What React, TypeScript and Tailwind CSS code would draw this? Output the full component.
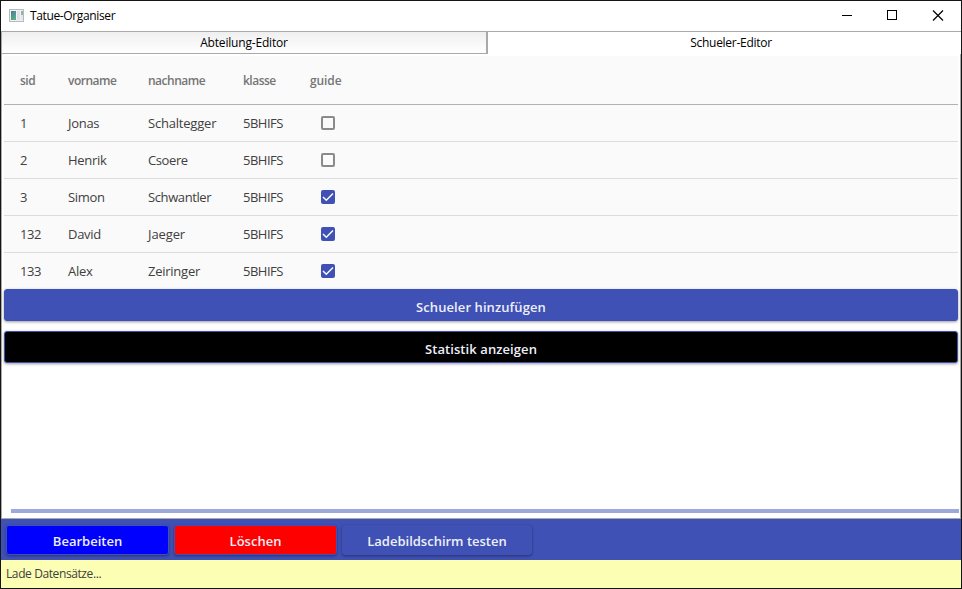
import type { ReactNode } from "react";

type Pupil = { sid: number; vorname: string; nachname: string; track: string; guide: boolean };

const pupils: Pupil[] = [
  { sid: 1, vorname: "Jonas", nachname: "Schaltegger", track: "tracking-[-0.2px]", guide: false },
  { sid: 2, vorname: "Henrik", nachname: "Csoere", track: "tracking-[-0.4px]", guide: false },
  { sid: 3, vorname: "Simon", nachname: "Schwantler", track: "tracking-[-0.4px]", guide: true },
  { sid: 132, vorname: "David", nachname: "Jaeger", track: "tracking-[-0.1px]", guide: true },
  { sid: 133, vorname: "Alex", nachname: "Zeiringer", track: "tracking-[-0.25px]", guide: true },
];

const columns = "grid grid-cols-[48px_80px_95px_67px_1fr] items-center pl-4";

function Checkbox({ checked }: { checked: boolean }) {
  if (!checked) {
    return <span className="-mt-0.5 ml-[11px] block size-3.5 rounded-[2px] border-2 border-[#8a8a8a]" />;
  }
  return (
    <span className="-mt-0.5 ml-[11px] block size-3.5 rounded-[2px] bg-[#3f51b5]">
      <svg viewBox="0 0 14 14" className="size-3.5" fill="none" stroke="#fafafa" strokeWidth="1.5">
        <path d="M2 7 5.3 10.2 12 3.5" />
      </svg>
    </span>
  );
}

function WideButton({ children, className }: { children: ReactNode; className: string }) {
  return (
    <button
      className={`flex h-8 w-full shrink-0 items-center justify-center rounded-[3px] border border-[#3f51b5] pt-[5px] text-[13px] font-semibold tracking-[0.08px] text-[#eeeff8] shadow-[0_1px_3px_rgba(0,0,0,0.4)] ${className}`}
    >
      {children}
    </button>
  );
}

function BarButton({ children, className }: { children: ReactNode; className: string }) {
  return (
    <button
      className={`flex h-[30px] items-center justify-center rounded-[3px] border border-[#3f51b5] pt-1 text-[13px] font-semibold text-[#eeeff8] shadow-[0_1px_3px_rgba(0,0,0,0.4)] ${className}`}
    >
      {children}
    </button>
  );
}

function AppIcon() {
  return (
    <svg width="16" height="14" viewBox="0 0 16 14" className="-mt-px">
      <defs>
        <linearGradient id="pane" x1="0" y1="0" x2="0.6" y2="1">
          <stop offset="0" stopColor="#4679a5" />
          <stop offset="1" stopColor="#5cae81" />
        </linearGradient>
      </defs>
      <rect x="0.5" y="0.5" width="14" height="12" fill="#f1f2f3" stroke="#b4babe" />
      <rect x="2" y="2" width="5" height="9" fill="url(#pane)" />
      <rect x="8" y="2" width="3" height="9" fill="#dfe3e7" />
      <rect x="12" y="2" width="2" height="4" fill="#8bb7a4" />
      <rect x="12" y="6" width="2" height="5" fill="#e2e5e8" />
    </svg>
  );
}

export default function App() {
  return (
    <div className="flex h-[589px] w-[962px] flex-col overflow-hidden border border-[#151515] bg-white font-['Open_Sans','Noto_Sans',sans-serif] text-xs text-black">
      <header className="flex h-[30px] shrink-0 items-center pl-2">
        <AppIcon />
        <span className="ml-[5px] text-[12px] tracking-[-0.36px]">Tatue-Organiser</span>
        <svg className="ml-auto" width="137" height="30" viewBox="0 0 137 30" fill="none" stroke="#000">
          <path d="M18 14.5h10" />
          <rect x="63.5" y="9.5" width="9" height="9" />
          <path d="m109 9.5 10 10m0-10-10 10" strokeWidth="1.2" />
        </svg>
      </header>

      <main className="flex h-[488px] shrink-0 flex-col border border-[#a9a9a9]">
        <nav className="-mr-px flex h-[22px] shrink-0">
          <div className="flex w-[486px] items-center justify-center border-r-2 border-b border-[#a9a9a9] bg-linear-to-b from-[#efefef] to-white pt-px tracking-[-0.18px]">
            Abteilung-Editor
          </div>
          <div className="flex flex-1 items-center justify-center bg-white pl-[13px] tracking-[-0.28px]">Schueler-Editor</div>
        </nav>

        <section className="mx-0.5 mt-0.5 flex h-[233px] w-[954px] shrink-0 flex-col bg-[#fafafa] text-[13px] text-[#404040]">
          <div className={`${columns} h-[49px] shrink-0 border-b border-[#b2b2b2] pt-0.5 text-xs font-semibold tracking-[-0.5px] text-[#757575]`}>
            <span>sid</span>
            <span>vorname</span>
            <span>nachname</span>
            <span>klasse</span>
            <span className="tracking-[-0.1px]">guide</span>
          </div>
          {pupils.map((p) => (
            <div key={p.sid} className={`${columns} h-[37px] shrink-0 border-b border-[#dcdcdc] pt-0.5 tracking-[-0.4px] last:border-transparent`}>
              <span>{p.sid}</span>
              <span className="tracking-[-0.3px]">{p.vorname}</span>
              <span className={p.track}>{p.nachname}</span>
              <span className="tracking-[-0.5px]">5BHIFS</span>
              <Checkbox checked={p.guide} />
            </div>
          ))}
        </section>

        <div className="mx-0.5 flex w-[954px] flex-col gap-2.5">
          <WideButton className="bg-[#3f51b5]">Schueler hinzufügen</WideButton>
          <WideButton className="bg-black">Statistik anzeigen</WideButton>
        </div>
        <div className="mt-auto mb-[5px] ml-[9px] h-1 w-[948px] shrink-0 bg-[#9fa8da]" />
      </main>

      <footer className="flex h-[41px] shrink-0 items-start gap-[5px] bg-[#3f51b5] pt-1.5 pl-[5px]">
        <BarButton className="w-[163px] bg-[#0000ff]">Bearbeiten</BarButton>
        <BarButton className="w-[163px] bg-[#ff0000]">Löschen</BarButton>
        <BarButton className="w-[190px] bg-[#3f51b5]">Ladebildschirm testen</BarButton>
      </footer>
      <div className="flex flex-1 items-center bg-[#fbfeb3] pl-[5px] text-xs tracking-[-0.4px] text-[#404040]">Lade Datensätze...</div>
    </div>
  );
}
